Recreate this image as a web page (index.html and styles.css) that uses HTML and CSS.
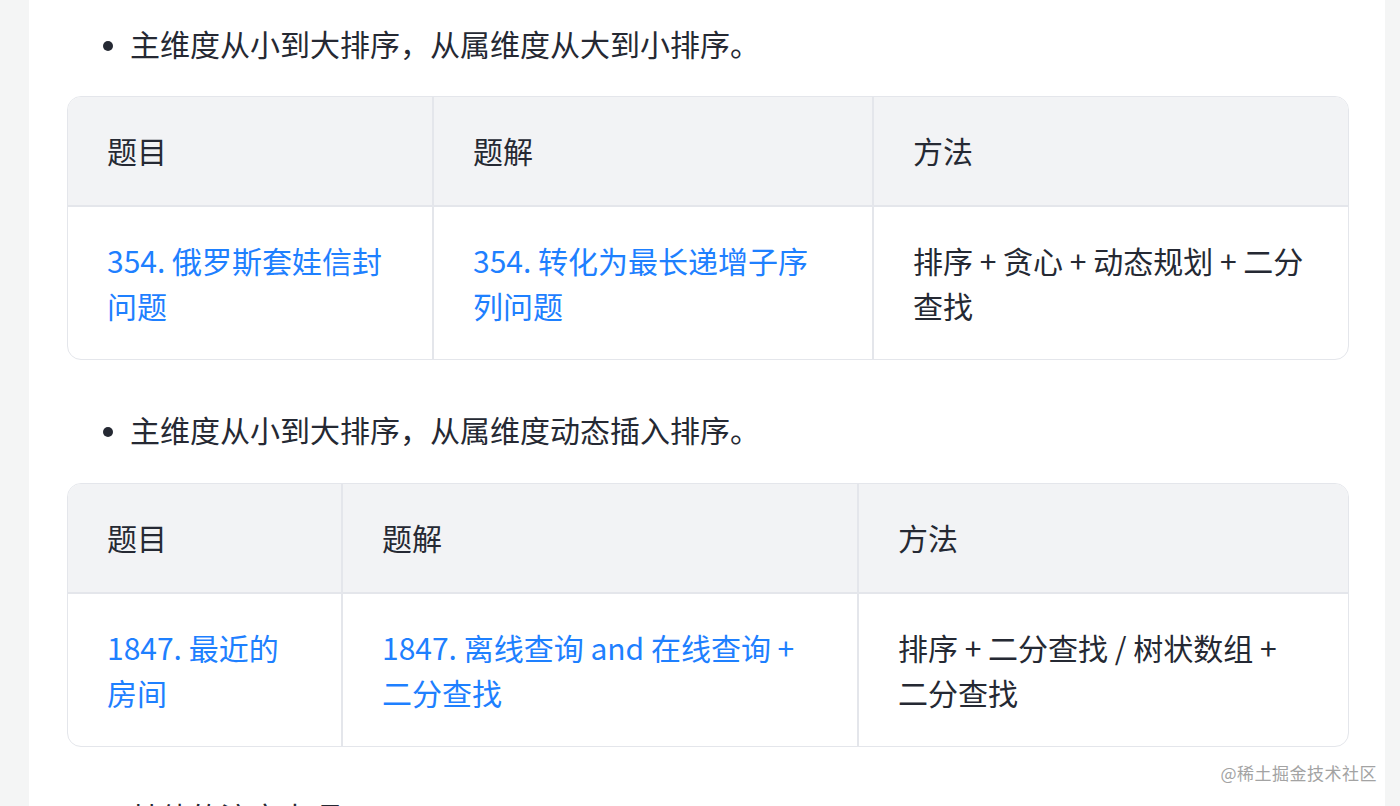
FILE: index.html
```html
<!DOCTYPE html>
<html lang="zh-CN">
<head>
<meta charset="utf-8">
<link rel="stylesheet" href="styles.css">
</head>
<body>
<div class="page">
  <article class="content">
    <ul class="list first">
      <li>主维度从小到大排序，从属维度从大到小排序。</li>
    </ul>
    <table class="tbl t1">
      <colgroup><col class="c1"><col class="c2"><col class="c3"></colgroup>
      <thead>
        <tr><th>题目</th><th>题解</th><th>方法</th></tr>
      </thead>
      <tbody>
        <tr>
          <td><a href="#">354. 俄罗斯套娃信封问题</a></td>
          <td><a href="#">354. 转化为最长递增子序列问题</a></td>
          <td>排序 + 贪心 + 动态规划 + 二分查找</td>
        </tr>
      </tbody>
    </table>
    <ul class="list">
      <li>主维度从小到大排序，从属维度动态插入排序。</li>
    </ul>
    <table class="tbl t2">
      <colgroup><col class="c1"><col class="c2"><col class="c3"></colgroup>
      <thead>
        <tr><th>题目</th><th>题解</th><th>方法</th></tr>
      </thead>
      <tbody>
        <tr>
          <td><a href="#">1847. 最近的房间</a></td>
          <td><a href="#">1847. 离线查询 and 在线查询 + 二分查找</a></td>
          <td>排序 + 二分查找 / 树状数组 + 二分查找</td>
        </tr>
      </tbody>
    </table>
    <ul class="list">
      <li>其他的注意事项</li>
    </ul>
  </article>
  <div class="watermark">@稀土掘金技术社区</div>
</div>
</body>
</html>
```

FILE: styles.css
```css
html, body {
  margin: 0;
  padding: 0;
  height: 100%;
  overflow: hidden;
}
body {
  background: #f4f5f5;
  font-family: "Noto Sans CJK SC", "Noto Sans", sans-serif;
  color: #252933;
}
.page {
  margin-left: 29px;
  width: 1356px;
  height: 806px;
  background: #ffffff;
  position: relative;
  overflow: hidden;
}
.content {
  padding: 21px 38px 0 38px;
  font-size: 30px;
  line-height: 45px;
}
.list {
  margin: 0;
  padding-left: 63px;
}
.list li::marker {
  font-size: 26px;
}
.tbl {
  width: 1280px;
  table-layout: fixed;
  border-collapse: separate;
  border-spacing: 0;
  border: 1px solid #e4e6eb;
  border-radius: 14px;
  overflow: hidden;
  margin: 30px 0 47px 0;
}
.t2 {
  margin-top: 31px;
}
.tbl th, .tbl td {
  text-align: left;
  font-weight: 400;
  padding: 31px 39px 32px 39px;
  border-right: 2px solid #e4e6eb;
  vertical-align: top;
}
.tbl th:last-child, .tbl td:last-child {
  border-right: none;
}
.tbl th {
  background: #f2f3f5;
  border-bottom: 2px solid #e4e6eb;
}
.tbl td {
  padding-bottom: 31px;
}
.tbl a {
  color: #1e80ff;
  text-decoration: none;
}
.t1 .c1 { width: 366px; }
.t1 .c2 { width: 440px; }
.t1 .c3 { width: 474px; }
.t2 .c1 { width: 275px; }
.t2 .c2 { width: 516px; }
.t2 .c3 { width: 489px; }
.watermark {
  position: absolute;
  right: 8px;
  top: 760px;
  font-size: 17px;
  line-height: 26px;
  color: #a3a3a3;
  letter-spacing: 0.5px;
}
```
